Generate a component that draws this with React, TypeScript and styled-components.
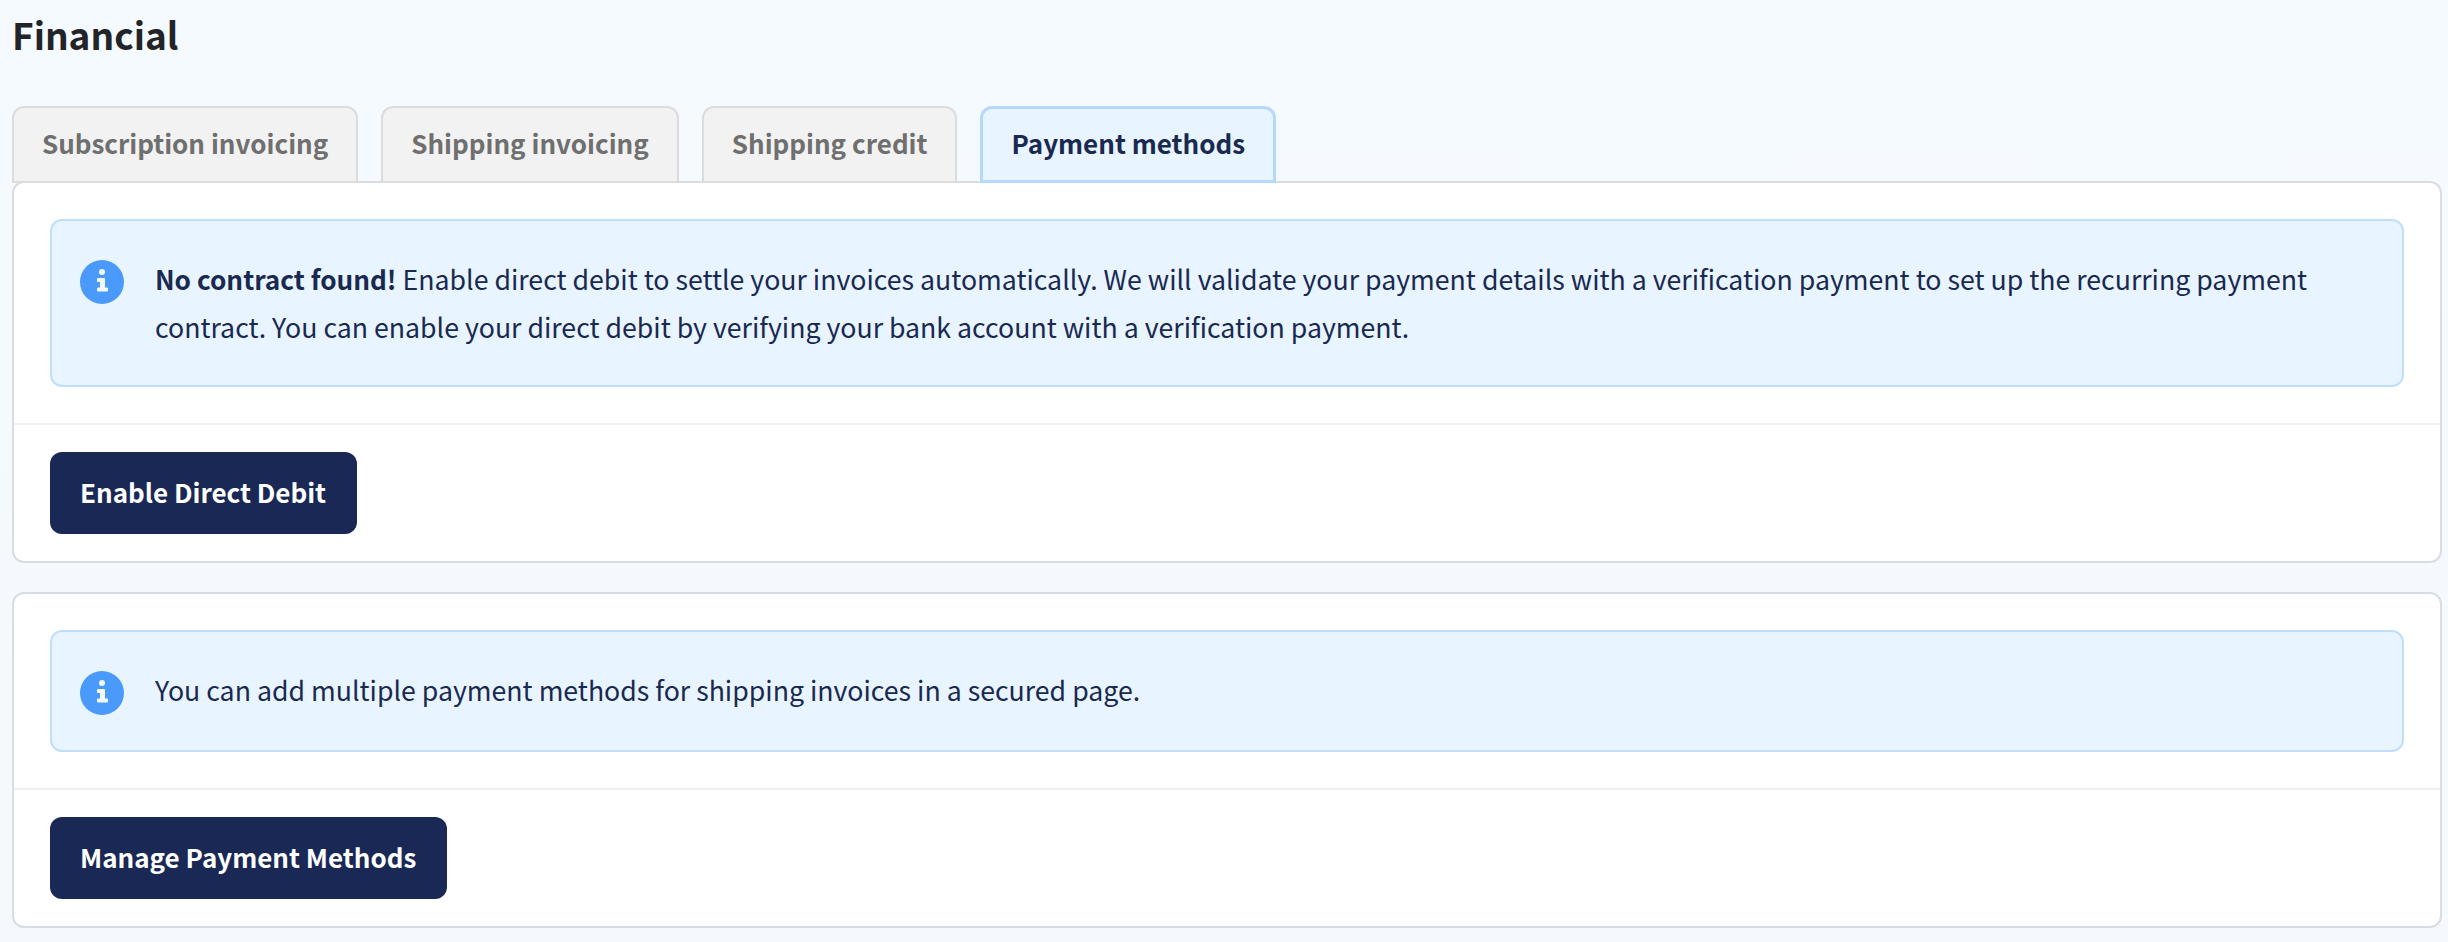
import React from "react";
import styled, { createGlobalStyle } from "styled-components";

const Global = createGlobalStyle`
  html, body { margin: 0; padding: 0; }
  body {
    background: linear-gradient(180deg, #f5faff 0%, #f5f9fe 100%);
    font-family: "Noto Sans CJK SC", "Noto Sans", sans-serif;
    color: #19294f;
    height: 942px;
    overflow: hidden;
  }
`;

const Page = styled.main`
  padding: 0 6px 0 12px;
  box-sizing: border-box;
`;

const Title = styled.h1`
  margin: 0;
  height: 106px;
  padding-top: 11px;
  box-sizing: border-box;
  font-size: 37px;
  line-height: 46px;
  font-weight: 700;
  color: #222428;
`;

const TabRow = styled.div`
  display: flex;
  gap: 23px;
  position: relative;
  z-index: 1;
  height: 77px;
  margin-bottom: -2px;
`;

const Tab = styled.div<{ $active?: boolean }>`
  box-sizing: border-box;
  display: flex;
  align-items: center;
  justify-content: center;
  height: 77px;
  padding: 0 28px 3px;
  border: ${(p) => (p.$active ? "3px solid #b5d9fd" : "2px solid #dcdcdc")};
  border-radius: 12px 12px 0 0;
  background: ${(p) => (p.$active ? "#e8f4ff" : "#f2f2f2")};
  color: ${(p) => (p.$active ? "#19294f" : "#6f6f6f")};
  font-size: 26px;
  font-weight: 700;
  line-height: 36px;
`;

const Card = styled.section`
  box-sizing: border-box;
  background: #fff;
  border: 2px solid #d9dde1;
  border-radius: 12px;
  margin-bottom: 29px;
`;

const CardBody = styled.div`
  padding: 36px;
  border-bottom: 2px solid #f0f0f0;
`;

const CardFooter = styled.div`
  padding: 27px 36px;
`;

const Alert = styled.div`
  box-sizing: border-box;
  display: flex;
  align-items: flex-start;
  gap: 31px;
  min-height: 122px;
  padding: 34px 30px 34px 28px;
  background: #e8f4ff;
  border: 2px solid #c0defc;
  border-radius: 12px;
`;

const IconWrap = styled.span`
  flex: none;
  width: 44px;
  height: 44px;
  margin-top: 5px;
`;

const AlertText = styled.p`
  margin: 0;
  font-size: 26.7px;
  line-height: 48px;
  font-weight: 400;
  color: #19294f;
  strong { font-weight: 700; font-size: 26.2px; }
`;

const Button = styled.button`
  display: block;
  box-sizing: border-box;
  height: 82px;
  padding: 0 31px 4px 30px;
  border: none;
  border-radius: 12px;
  background: #192854;
  color: #fff;
  font-family: inherit;
  font-size: 26px;
  font-weight: 700;
`;

const InfoIcon = () => (
  <svg width="44" height="44" viewBox="0 0 44 44">
    <circle cx="22" cy="22" r="22" fill="#4a9afc" />
    <circle cx="22" cy="12" r="3" fill="#f3f9ff" />
    <path
      d="M17.5 18.5h7v9.5h3v3h-10v-3h3v-6.5h-3z"
      fill="#f3f9ff"
      stroke="#f3f9ff"
      strokeWidth="1"
      strokeLinejoin="round"
    />
  </svg>
);

export default function App() {
  return (
    <Page>
      <Global />
      <Title>Financial</Title>
      <TabRow>
        <Tab>Subscription invoicing</Tab>
        <Tab>Shipping invoicing</Tab>
        <Tab>Shipping credit</Tab>
        <Tab $active>Payment methods</Tab>
      </TabRow>
      <Card>
        <CardBody>
          <Alert>
            <IconWrap><InfoIcon /></IconWrap>
            <AlertText>
              <strong>No contract found!</strong> Enable direct debit to settle your invoices automatically. We will validate your payment details with a verification payment to set up the recurring payment contract. You can enable your direct debit by verifying your bank account with a verification payment.
            </AlertText>
          </Alert>
        </CardBody>
        <CardFooter>
          <Button>Enable Direct Debit</Button>
        </CardFooter>
      </Card>
      <Card>
        <CardBody>
          <Alert>
            <IconWrap><InfoIcon /></IconWrap>
            <AlertText>You can add multiple payment methods for shipping invoices in a secured page.</AlertText>
          </Alert>
        </CardBody>
        <CardFooter>
          <Button>Manage Payment Methods</Button>
        </CardFooter>
      </Card>
    </Page>
  );
}
